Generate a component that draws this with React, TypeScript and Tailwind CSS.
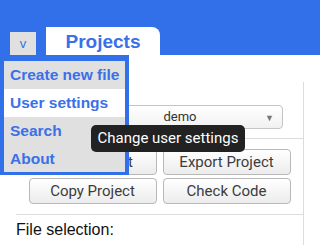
import React from 'react';

const menuItems = ['Create new file', 'User settings', 'Search', 'About'];

const Button = ({ label }: { label: string }) => (
    <button className="h-[26px] w-[128px] rounded-[4px] border border-[#b8b8b8] bg-gradient-to-b from-white to-[#ececec] text-[15px] text-[#3c3c3c] font-['Roboto',sans-serif] leading-none">
        {label}
    </button>
);

const App = () => {
    return (
        <div className="relative w-[320px] h-[245px] overflow-hidden bg-white font-['Liberation_Sans',Arial,sans-serif]">
            {/* Header */}
            <div className="h-[55px] bg-[#3170e9] flex items-end">
                <div className="ml-[10px] w-[26px] h-[23px] bg-[#e0e0e0] flex items-center justify-center text-[13px] text-[#3a70e8] leading-none">v</div>
                <div className="ml-[10px] w-[114px] h-[28px] bg-white rounded-tr-[8px] flex items-center justify-center text-[19px] font-bold text-[#3a70e8] leading-none">
                    Projects
                </div>
            </div>

            {/* Panel */}
            <div className="ml-[16px] mt-[27px] w-[288px] border-r border-[#dcdcdc]">
                <div className="flex items-center pt-[23px] pb-[9px]">
                    <span className="w-[61px] text-[14px] text-[#333]">Project:</span>
                    <div className="relative w-[206px] h-[24px] rounded-[4px] border border-[#c4c4c4] bg-gradient-to-b from-white to-[#f1f1f1] flex items-center justify-center text-[13px] text-[#333] font-['Roboto',sans-serif]">
                        demo
                        <span className="absolute right-[8px] top-[6px] text-[9px] text-[#777]">▼</span>
                    </div>
                </div>
                <div className="border-t border-[#dcdcdc] pt-[10px] pb-[10px] flex flex-col items-center gap-[3px]">
                    <div className="flex gap-[6px]">
                        <Button label="New Project" />
                        <Button label="Export Project" />
                    </div>
                    <div className="flex gap-[6px]">
                        <Button label="Copy Project" />
                        <Button label="Check Code" />
                    </div>
                </div>
                <div className="border-t border-[#dcdcdc] pt-[5px] pb-[20px] text-[16px] leading-[20px] text-[#111]">
                    File selection:
                </div>
            </div>

            {/* Dropdown menu */}
            <div className="absolute left-0 top-[55px] w-[129px] border-[#3170e9] border-x-4 border-t-[6px] border-b-[3px]">
                {menuItems.map((item, i) => (
                    <div
                        key={item}
                        className={`${i === 1 ? 'bg-white' : 'bg-[#e0e0e0]'} ${i === 3 ? 'h-[27px]' : 'h-[28px]'} flex items-center pl-[6px] text-[15.5px] font-bold text-[#3a70e8] leading-none whitespace-nowrap`}
                    >
                        {item}
                    </div>
                ))}
            </div>

            {/* Tooltip */}
            <div className="absolute left-[91px] top-[125px] w-[154px] h-[27px] rounded-[5px] bg-[#222] flex items-center justify-center text-[15px] text-white font-['Roboto',sans-serif] leading-none">
                Change user settings
            </div>
        </div>
    );
};

export default App;
